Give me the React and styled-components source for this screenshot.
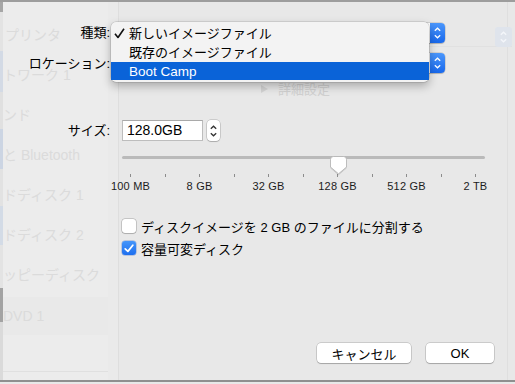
import React from "react";
import styled, { createGlobalStyle } from "styled-components";

const GlobalStyle = createGlobalStyle`
  html, body { margin: 0; padding: 0; }
  body {
    background: #e8e8e8;
    font-family: "Liberation Sans", "Noto Sans CJK JP", sans-serif;
  }
  *, *::before, *::after { box-sizing: border-box; }
`;

const FONT = `"Liberation Sans", "Noto Sans CJK JP", sans-serif`;

const Screen = styled.div`
  position: relative;
  width: 515px;
  height: 384px;
  overflow: hidden;
  background: #e8e8e8;
  font-family: ${FONT};
  color: #000;
`;

/* ---------- window behind the sheet (faded) ---------- */
const Backdrop = styled.div`
  position: absolute;
  inset: 0;
  display: flex;
  flex-direction: column;
  pointer-events: none;
`;
const TopEdge = styled.div`
  flex: none;
  height: 2px;
  background: #9d9d9d;
`;
const BackBody = styled.div`
  flex: 1;
  display: flex;
  min-height: 0;
`;
const IconStrip = styled.div`
  flex: none;
  width: 3px;
  display: flex;
  flex-direction: column;
  background: #dcdcdc;
`;
const StripSeg = styled.div`
  height: ${(p) => p.$h}px;
  background: ${(p) => p.$c};
`;
const SideColumn = styled.div`
  flex: none;
  width: 105px;
  display: flex;
  flex-direction: column;
  background: #ececec;
`;
const SideList = styled.div`
  flex: 1;
  display: flex;
  flex-direction: column;
  padding-top: 12px;
  border-bottom: 1px solid #e0e0e0;
`;
const SideItem = styled.div`
  height: ${(p) => (p.$selected ? 38 : 40)}px;
  margin-top: ${(p) => (p.$selected ? 3 : 0)}px;
  display: flex;
  align-items: center;
  padding-left: ${(p) => p.$indent || 0}px;
  font-size: 14px;
  color: #dbdbdb;
  white-space: nowrap;
  background: ${(p) => (p.$selected ? "#e9e9e9" : "transparent")};
`;
const SideFooter = styled.div`
  flex: none;
  height: 8px;
`;
const Gutter = styled.div`
  flex: none;
  width: 11px;
  background: #eaeaea;
  border-right: 1px solid #dedede;
`;
const BackMain = styled.div`
  flex: 1;
  display: flex;
  flex-direction: column;
  padding-top: 25px;
  border-right: 1px solid #dfdfdf;
  margin-right: 7px;
`;
const GhostPopupRow = styled.div`
  display: flex;
  justify-content: flex-end;
  margin-right: -5px;
`;
const GhostPopup = styled.div`
  width: 120px;
  height: 20px;
  display: flex;
  justify-content: flex-end;
  border-bottom: 1px solid #e1e1e1;
`;
const GhostArrow = styled.div`
  width: 17px;
  height: 20px;
  border-radius: 3px;
  background: #dfe4ec;
  display: flex;
  align-items: center;
  justify-content: center;
`;
const GhostDisclosure = styled.div`
  margin-top: 32px;
  margin-left: 142px;
  display: flex;
  align-items: center;
  gap: 10px;
  font-size: 13px;
  color: #d0d0d0;
`;
const BottomEdge = styled.div`
  flex: none;
  height: 2px;
  background: #8f8f8f;
  margin-bottom: 2px;
`;

/* ---------- the sheet ---------- */
const Sheet = styled.div`
  position: relative;
  height: 384px;
  display: flex;
  flex-direction: column;
  padding: 23px 21px 21px 0;
`;
const FieldRow = styled.div`
  display: grid;
  grid-template-columns: 110px auto;
  column-gap: ${(p) => p.$gap}px;
  align-items: center;
  justify-content: start;
  margin-top: ${(p) => p.$mt || 0}px;
`;
const Label = styled.div`
  text-align: right;
  font-size: 13px;
  line-height: 16px;
  padding-top: ${(p) => p.$dy || 0}px;
  white-space: nowrap;
`;
const Popup = styled.div`
  width: 329px;
  height: 20px;
  display: flex;
  justify-content: flex-end;
  background: #fff;
  border-radius: 4px;
  box-shadow: 0 0 0 0.5px rgba(0, 0, 0, 0.2), 0 1px 1px rgba(0, 0, 0, 0.15);
`;
const PopupArrow = styled.div`
  width: 15px;
  height: 20px;
  border-radius: 0 4px 4px 0;
  background: linear-gradient(#4a96fb, #1868ec);
  display: flex;
  align-items: center;
  justify-content: center;
`;
const SizeGroup = styled.div`
  display: flex;
  align-items: center;
  gap: 4px;
`;
const SizeField = styled.div`
  width: 81px;
  height: 21px;
  background: #fff;
  border: 1px solid #bdbdbd;
  border-top-color: #a9a9a9;
  padding-left: 4px;
  font-size: 14px;
  line-height: 19px;
`;
const Stepper = styled.div`
  width: 13px;
  height: 21px;
  background: #fff;
  border-radius: 4px;
  box-shadow: 0 0 0 0.5px rgba(0, 0, 0, 0.25), 0 1px 1px rgba(0, 0, 0, 0.15);
  display: flex;
  align-items: center;
  justify-content: center;
`;
const Controls = styled.div`
  margin-left: 122px;
  display: flex;
  flex-direction: column;
`;
const SliderBlock = styled.div`
  width: 363px;
  margin-top: 10px;
`;
const Rail = styled.div`
  position: relative;
  height: 18px;
`;
const Track = styled.div`
  margin-top: 5px;
  height: 3px;
  border-radius: 2px;
  background: #bababa;
`;
const Knob = styled.svg`
  position: absolute;
  top: 0;
  width: 17px;
  height: 19px;
  overflow: visible;
`;
const TickRow = styled.div`
  height: 3px;
  display: flex;
  justify-content: space-between;
  padding: 0 9px 0 8px;
`;
const Tick = styled.div`
  width: 1px;
  height: 3px;
  background: #8c8c8c;
`;
const TickLabels = styled.div`
  margin-top: 3px;
  display: flex;
  justify-content: space-between;
  padding: 0 9px 0 8px;
`;
const TickLabel = styled.div`
  width: 1px;
  display: flex;
  justify-content: center;
  white-space: nowrap;
  font-size: 11px;
  line-height: 12px;
  color: #1c1c1c;
  letter-spacing: 0.2px;
`;
const Slot = styled.div`
  width: 1px;
`;
const CheckRow = styled.div`
  display: flex;
  align-items: center;
  gap: 5px;
  height: 16px;
  margin-top: ${(p) => p.$mt}px;
  font-size: 13px;
  white-space: nowrap;
`;
const Box = styled.div`
  width: 14px;
  height: 14px;
  border-radius: 3px;
  display: flex;
  align-items: center;
  justify-content: center;
  background: ${(p) => (p.$checked ? "linear-gradient(#4495fa, #1e6fef)" : "#fff")};
  box-shadow: ${(p) =>
    p.$checked
      ? "0 0 0 0.5px rgba(0,60,180,0.4)"
      : "0 0 0 0.5px rgba(0,0,0,0.3), 0 1px 1px rgba(0,0,0,0.12)"};
`;
const ButtonBar = styled.div`
  margin-top: auto;
  display: flex;
  justify-content: flex-end;
  gap: 15px;
`;
const Button = styled.div`
  width: ${(p) => p.$w}px;
  height: 20px;
  background: #fff;
  border-radius: 4px;
  box-shadow: 0 0 0 0.5px rgba(0, 0, 0, 0.25), 0 1px 1px rgba(0, 0, 0, 0.18);
  display: flex;
  align-items: center;
  justify-content: center;
  font-size: 13px;
`;

/* ---------- open popup menu ---------- */
const Menu = styled.div`
  position: absolute;
  left: 111px;
  top: 22px;
  width: 318px;
  padding: 2px 0 2px;
  background: #f3f3f3;
  border-radius: 5px;
  box-shadow: 0 0 0 0.5px rgba(0, 0, 0, 0.18), 0 4px 10px rgba(0, 0, 0, 0.28);
`;
const MenuItem = styled.div`
  position: relative;
  height: ${(p) => (p.$active ? 18 : 19)}px;
  display: flex;
  align-items: center;
  padding-left: 18px;
  padding-bottom: ${(p) => (p.$active ? 0 : 2)}px;
  font-size: ${(p) => (p.$latin ? 13.5 : 13)}px;
  color: ${(p) => (p.$active ? "#fff" : "#000")};
  background: ${(p) => (p.$active ? "#0a63d8" : "transparent")};
`;
const Check = styled.svg`
  position: absolute;
  left: 3px;
  top: 4px;
`;

const Chevrons = ({ color, size = 7 }) => (
  <svg width={size} height="14" viewBox="0 0 7 14">
    <path d="M0.8 4.8 L3.5 2.2 L6.2 4.8" fill="none" stroke={color} strokeWidth="1.3" />
    <path d="M0.8 9.2 L3.5 11.8 L6.2 9.2" fill="none" stroke={color} strokeWidth="1.3" />
  </svg>
);

const sidebar = [
  { t: "プリンタ", indent: 2 },
  { t: "トワーク 1" },
  { t: "ンド" },
  { t: "と Bluetooth" },
  { t: "ドディスク 1" },
  { t: "ドディスク 2" },
  { t: "ッピーディスク" },
  { t: "DVD 1", selected: true },
];

const strip = [
  { h: 10, c: "#a6a6a6" },
  { h: 41, c: "#e3e3e3" },
  { h: 42, c: "#d3dae5" },
  { h: 38, c: "#e0e0e0" },
  { h: 42, c: "#ccd5e3" },
  { h: 38, c: "#e2e2e2" },
  { h: 40, c: "#d3dbe6" },
  { h: 45, c: "#e3e3e3" },
  { h: 35, c: "#a3a3a3" },
  { h: 60, c: "#dadada" },
];

const ticks = Array.from({ length: 11 });
const labels = ["100 MB", "8 GB", "32 GB", "128 GB", "512 GB", "2 TB"];
const value = 0.6;

export default function App() {
  return (
    <>
      <GlobalStyle />
      <Screen>
        <Backdrop aria-hidden>
          <TopEdge />
          <BackBody>
            <IconStrip>
              {strip.map((s, i) => (
                <StripSeg key={i} $h={s.h} $c={s.c} />
              ))}
            </IconStrip>
            <SideColumn>
              <SideList>
                {sidebar.map((s) => (
                  <SideItem key={s.t} $indent={s.indent} $selected={s.selected}>
                    {s.t}
                  </SideItem>
                ))}
              </SideList>
              <SideFooter />
            </SideColumn>
            <Gutter />
            <BackMain>
              <GhostPopupRow>
                <GhostPopup>
                  <GhostArrow>
                    <Chevrons color="#f4f6fa" />
                  </GhostArrow>
                </GhostPopup>
              </GhostPopupRow>
              <GhostDisclosure>
                <svg width="7" height="8" viewBox="0 0 7 8">
                  <path d="M0 0 L7 4 L0 8 Z" fill="#d4d4d4" />
                </svg>
                詳細設定
              </GhostDisclosure>
            </BackMain>
          </BackBody>
          <BottomEdge />
        </Backdrop>

        <Sheet>
          <FieldRow $gap={6}>
            <Label>種類:</Label>
            <Popup>
              <PopupArrow>
                <Chevrons color="#fff" />
              </PopupArrow>
            </Popup>
          </FieldRow>
          <FieldRow $gap={6} $mt={10}>
            <Label $dy={1}>ロケーション:</Label>
            <Popup>
              <PopupArrow>
                <Chevrons color="#fff" />
              </PopupArrow>
            </Popup>
          </FieldRow>
          <FieldRow $gap={12} $mt={47}>
            <Label>サイズ:</Label>
            <SizeGroup>
              <SizeField>128.0GB</SizeField>
              <Stepper>
                <Chevrons color="#333" size={7} />
              </Stepper>
            </SizeGroup>
          </FieldRow>

          <Controls>
            <SliderBlock>
              <Rail>
                <Track />
                <Knob
                  viewBox="0 0 17 19"
                  style={{ left: `calc(${value} * (100% - 17px))` }}
                >
                  <defs>
                    <filter id="ks" x="-30%" y="-30%" width="160%" height="160%">
                      <feDropShadow dx="0" dy="0.5" stdDeviation="0.6" floodColor="#000" floodOpacity="0.3" />
                    </filter>
                  </defs>
                  <path
                    d="M3.5 0.5 H13.5 Q16.5 0.5 16.5 3.5 V11 L8.5 17.8 L0.5 11 V3.5 Q0.5 0.5 3.5 0.5 Z"
                    fill="#fff"
                    stroke="#b4b4b4"
                    strokeWidth="0.8"
                    filter="url(#ks)"
                  />
                </Knob>
              </Rail>
              <TickRow>
                {ticks.map((_, i) => (
                  <Tick key={i} />
                ))}
              </TickRow>
              <TickLabels>
                {ticks.map((_, i) =>
                  i % 2 === 0 ? (
                    <TickLabel key={i}>{labels[i / 2]}</TickLabel>
                  ) : (
                    <Slot key={i} />
                  )
                )}
              </TickLabels>
            </SliderBlock>

            <CheckRow $mt={26}>
              <Box />
              ディスクイメージを 2 GB のファイルに分割する
            </CheckRow>
            <CheckRow $mt={6}>
              <Box $checked>
                <svg width="10" height="9" viewBox="0 0 10 9">
                  <path d="M1.2 4.8 L3.9 7.4 L8.8 1.2" fill="none" stroke="#fff" strokeWidth="1.7" strokeLinecap="round" strokeLinejoin="round" />
                </svg>
              </Box>
              容量可変ディスク
            </CheckRow>
          </Controls>

          <ButtonBar>
            <Button $w={94}>キャンセル</Button>
            <Button $w={68}>OK</Button>
          </ButtonBar>
        </Sheet>

        <Menu>
          <MenuItem>
            <Check width="11" height="11" viewBox="0 0 11 11">
              <path d="M1 5.8 L4 9.5 L10 0.8" fill="none" stroke="#111" strokeWidth="1.6" strokeLinejoin="round" />
            </Check>
            新しいイメージファイル
          </MenuItem>
          <MenuItem>既存のイメージファイル</MenuItem>
          <MenuItem $active $latin>Boot Camp</MenuItem>
        </Menu>
      </Screen>
    </>
  );
}
